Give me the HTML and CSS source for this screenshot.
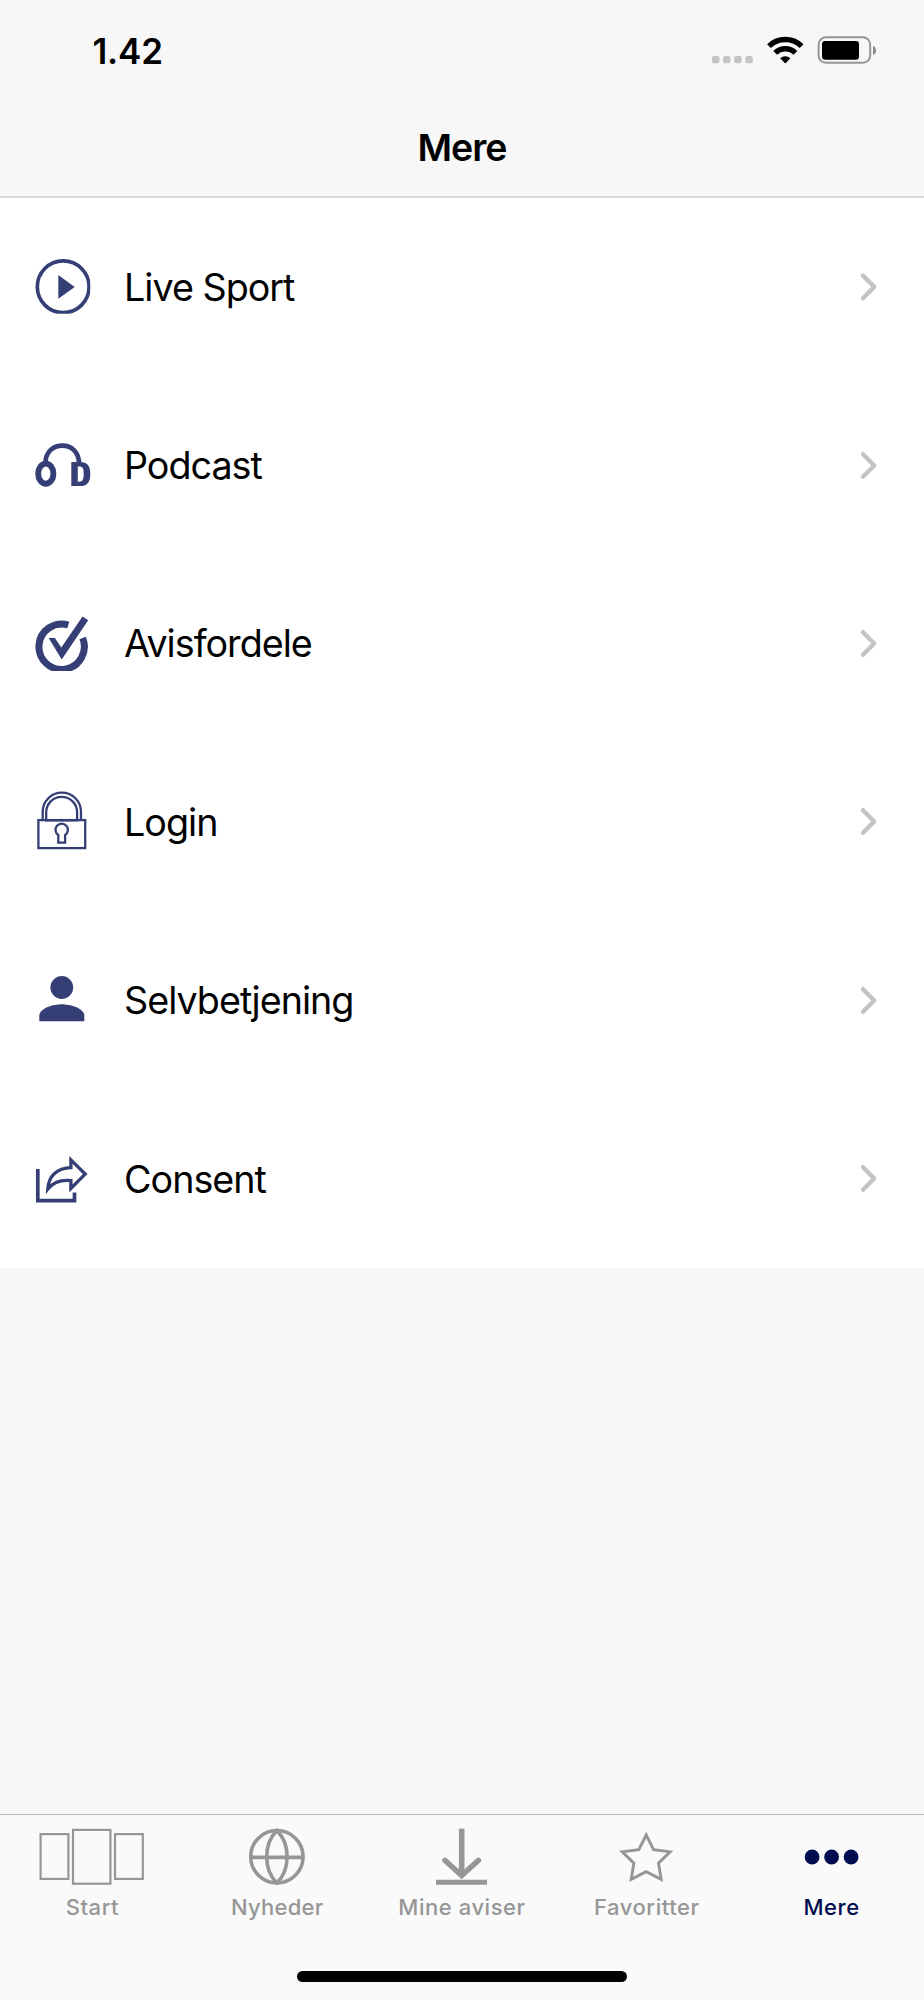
FILE: index.html
```html
<!DOCTYPE html>
<html lang="da">
<head>
<meta charset="utf-8">
<title>Mere</title>
<link rel="stylesheet" href="styles.css">
</head>
<body>
<div class="screen">
  <header class="header">
    <div class="status">
      <span class="time">1.42</span>
      <svg class="status-icons" width="172" height="40" viewBox="708 30 172 40">
        <g fill="#c4c4c4">
          <rect x="712" y="56" width="7.4" height="7.2" rx="2"/>
          <rect x="723" y="56" width="7.4" height="7.2" rx="2"/>
          <rect x="734.2" y="56" width="7.4" height="7.2" rx="2"/>
          <rect x="745.4" y="56" width="7.4" height="7.2" rx="2"/>
        </g>
        <g fill="none" stroke="#000" stroke-width="5.4">
          <path d="M769 46.2A23.2 23.2 0 0 1 801.6 46.2"/>
          <path d="M775.2 52.9A14.3 14.3 0 0 1 795.4 52.9"/>
        </g>
        <path d="M780.2 58.2A7.6 7.6 0 0 1 790.4 58.2L785.3 63.4Z"/>
        <rect x="818.6" y="37.2" width="51.6" height="25.6" rx="7.4" fill="none" stroke="#959595" stroke-width="2"/>
        <rect x="822" y="41" width="37" height="18.8" rx="3.2"/>
        <path d="M873 46C877.200 47.600 877.200 53.400 873 55Z" fill="#8c8c8c"/>
      </svg>
    </div>
    <h1 class="title">Mere</h1>
  </header>

  <main class="list">
    <a class="row">
      <svg class="row-icon" viewBox="0 0 64 64">
        <clipPath id="play-clip"><rect width="58.300" height="58.800"/></clipPath>
        <g clip-path="url(#play-clip)">
          <circle cx="31.200" cy="31.800" r="25.900" fill="none" stroke="currentColor" stroke-width="3.700"/>
          <path d="M26.300 20.100L42.700 32.100L26.300 43.800Z" fill="currentColor"/>
        </g>
      </svg>
      <span class="label">Live Sport</span>
      <svg class="chevron" viewBox="0 0 20 32"><path d="M4 4.600L15.200 15.900L4 27.200"/></svg>
    </a>
    <a class="row">
      <svg class="row-icon" viewBox="0 0 64 64">
        <path d="M13.500 29C13.500 18 21 11.600 30.300 11.600S47.100 18 47.100 30" fill="none" stroke="currentColor" stroke-width="4.700"/>
        <ellipse cx="13.800" cy="39.700" rx="7.600" ry="10.100" fill="none" stroke="currentColor" stroke-width="5.900"/>
        <path d="M39.300 28.100H48C55 28.100 58.300 31.500 58.300 40S55 52.100 48 52.100H39.300ZM45.800 32.400V47.700H47.300C50.600 47.700 51.700 45.500 51.700 40S50.600 32.400 47.300 32.400Z" fill="currentColor" fill-rule="evenodd"/>
      </svg>
      <span class="label">Podcast</span>
      <svg class="chevron" viewBox="0 0 20 32"><path d="M4 4.200L15.200 15.500L4 26.800"/></svg>
    </a>
    <a class="row">
      <svg class="row-icon" viewBox="0 0 64 64">
        <clipPath id="check-clip"><rect width="64" height="59"/></clipPath>
        <g clip-path="url(#check-clip)">
          <path d="M50.600 26A22.700 22.700 0 1 1 36.300 13" fill="none" stroke="currentColor" stroke-width="7"/>
          <path d="M16.700 26H22.900L29.300 35.400L50.500 4.500L56.200 8.300L29.700 47.600Z" fill="currentColor"/>
        </g>
      </svg>
      <span class="label">Avisfordele</span>
      <svg class="chevron" viewBox="0 0 20 32"><path d="M4 4.200L15.200 15.500L4 26.800"/></svg>
    </a>
    <a class="row">
      <svg class="row-icon" viewBox="0 0 64 64" fill="none" stroke="currentColor" stroke-width="2.300">
        <rect x="6.400" y="30.100" width="46.800" height="28"/>
        <path d="M10.700 29.900V21.800A19.150 19.150 0 0 1 49 21.800V29.900"/>
        <path d="M14.200 30.400V22.300A15.450 15.450 0 0 1 45.100 22.300V30.400Z"/>
        <path d="M26.300 52.600V45A6.200 6.200 0 1 1 33.100 45V52.600Z"/>
      </svg>
      <span class="label">Login</span>
      <svg class="chevron" viewBox="0 0 20 32"><path d="M4 4.200L15.200 15.500L4 26.800"/></svg>
    </a>
    <a class="row">
      <svg class="row-icon" viewBox="0 0 64 64" fill="currentColor">
        <circle cx="29.800" cy="18.500" r="11.400"/>
        <path d="M7.300 52.200V46.600C7.300 39 22 35.200 29.800 35.200S52.300 39 52.300 46.600V52.200Z"/>
      </svg>
      <span class="label">Selvbetjening</span>
      <svg class="chevron" viewBox="0 0 20 32"><path d="M4 4.200L15.200 15.500L4 26.800"/></svg>
    </a>
    <a class="row">
      <svg class="row-icon" viewBox="0 0 64 64" fill="none" stroke="currentColor">
        <path d="M5.800 22.100V53.700H42.500V45.500" stroke-width="3.700"/>
        <path d="M38.900 12.900L53.200 27.100L38.900 41.500V33.600C29 32.600 21 35.500 15.800 42C16.700 29 25 21 38.900 20.600Z" stroke-width="3.300"/>
      </svg>
      <span class="label">Consent</span>
      <svg class="chevron" viewBox="0 0 20 32"><path d="M4 4.200L15.200 15.500L4 26.800"/></svg>
    </a>
  </main>

  <footer class="tabbar">
    <nav class="tabs">
      <a class="tab">
        <svg class="tab-icon" viewBox="0 0 110 64" fill="none" stroke="currentColor" stroke-width="2.200">
          <rect x="3.600" y="10.100" width="27.800" height="44.800"/>
          <rect x="36" y="5.900" width="37.400" height="53.800"/>
          <rect x="78" y="10.100" width="27.800" height="44.800"/>
        </svg>
        <span>Start</span>
      </a>
      <a class="tab">
        <svg class="tab-icon" viewBox="0 0 110 64" fill="none" stroke="currentColor" stroke-width="3.600">
          <circle cx="54.900" cy="32.700" r="26.200"/>
          <path d="M54.900 6.400C41.300 20 41.300 45.400 54.900 59C68.500 45.400 68.500 20 54.900 6.400ZM28.600 33.400H81.200"/>
        </svg>
        <span class="nyheder">Nyheder</span>
      </a>
      <a class="tab">
        <svg class="tab-icon" viewBox="0 0 110 64" fill="none" stroke="currentColor" stroke-width="5">
          <path d="M54.700 4.700V51" stroke-width="5.600"/>
          <path d="M29 58.200H80"/>
          <path d="M37.900 36.300L54.700 51.600L71.500 36.300" stroke-width="5.400" stroke-linecap="round"/>
        </svg>
        <span>Mine aviser</span>
      </a>
      <a class="tab">
        <svg class="tab-icon" viewBox="0 0 110 64" fill="none" stroke="currentColor" stroke-width="2.900">
          <path d="M54.200 11L61.600 25.700L78.200 27.900L66.500 39.100L69.200 55.400L54.200 47.700L39.200 55.400L41.900 39.100L30.200 27.900L46.800 25.700Z"/>
        </svg>
        <span>Favoritter</span>
      </a>
      <a class="tab active">
        <svg class="tab-icon" viewBox="0 0 110 64" fill="currentColor">
          <circle cx="35.100" cy="33" r="7.400"/><circle cx="54.600" cy="33" r="7.400"/><circle cx="74.100" cy="33" r="7.400"/>
        </svg>
        <span>Mere</span>
      </a>
    </nav>
    <div class="home-indicator"></div>
  </footer>
</div>
</body>
</html>
```
FILE: styles.css
```css
* { box-sizing: border-box; }

body {
  margin: 0;
  font-family: Inter, "Liberation Sans", sans-serif;
  color: #000;
}

.screen {
  display: flex;
  flex-direction: column;
  width: 924px;
  height: 2000px;
  background: #f7f7f7;
}

.header {
  height: 198px;
  border-bottom: 2px solid #dadada;
}

.status {
  display: flex;
  justify-content: space-between;
  height: 100px;
  padding: 30px 44px 0 92.500px;
}

.time {
  font-size: 35px;
  font-weight: 600;
  line-height: 42px;
  letter-spacing: -0.200px;
}

.title {
  margin: 0;
  padding-top: 24px;
  font-size: 37.500px;
  font-weight: 600;
  line-height: 48px;
  letter-spacing: -1px;
  text-align: center;
}

.list {
  height: 1070px;
  background: #fff;
}

.row {
  display: flex;
  align-items: center;
  height: 178.400px;
  padding: 0 44px 0 32px;
}

.row-icon {
  width: 64px;
  height: 64px;
  color: #353f75;
}

.label {
  flex: 1;
  padding: 0 0 1px 28px;
  font-size: 37.700px;
  line-height: 48px;
  letter-spacing: -1px;
}

.chevron {
  width: 20px;
  height: 32px;
  margin-right: 1px;
  fill: none;
  stroke: #c4c4c6;
  stroke-width: 4.400;
  stroke-linecap: round;
  stroke-linejoin: round;
}

.tabbar {
  display: flex;
  flex-direction: column;
  align-items: center;
  height: 186px;
  margin-top: auto;
  border-top: 1px solid #bababa;
  background: #fafafa;
}

.tabs {
  display: grid;
  grid-template-columns: repeat(5, 1fr);
  width: 100%;
  height: 156px;
  padding-top: 9px;
}

.tab {
  display: flex;
  flex-direction: column;
  align-items: center;
  color: #969696;
  font-size: 22px;
  font-weight: 500;
  line-height: 28px;
  letter-spacing: 0.550px;
}

.nyheder { letter-spacing: 0.250px; }

.tab-icon {
  width: 110px;
  height: 64px;
  margin-bottom: 5px;
}

.active { color: #000c50; }

.home-indicator {
  width: 330px;
  height: 11px;
  border-radius: 6px;
  background: #000;
}
```
